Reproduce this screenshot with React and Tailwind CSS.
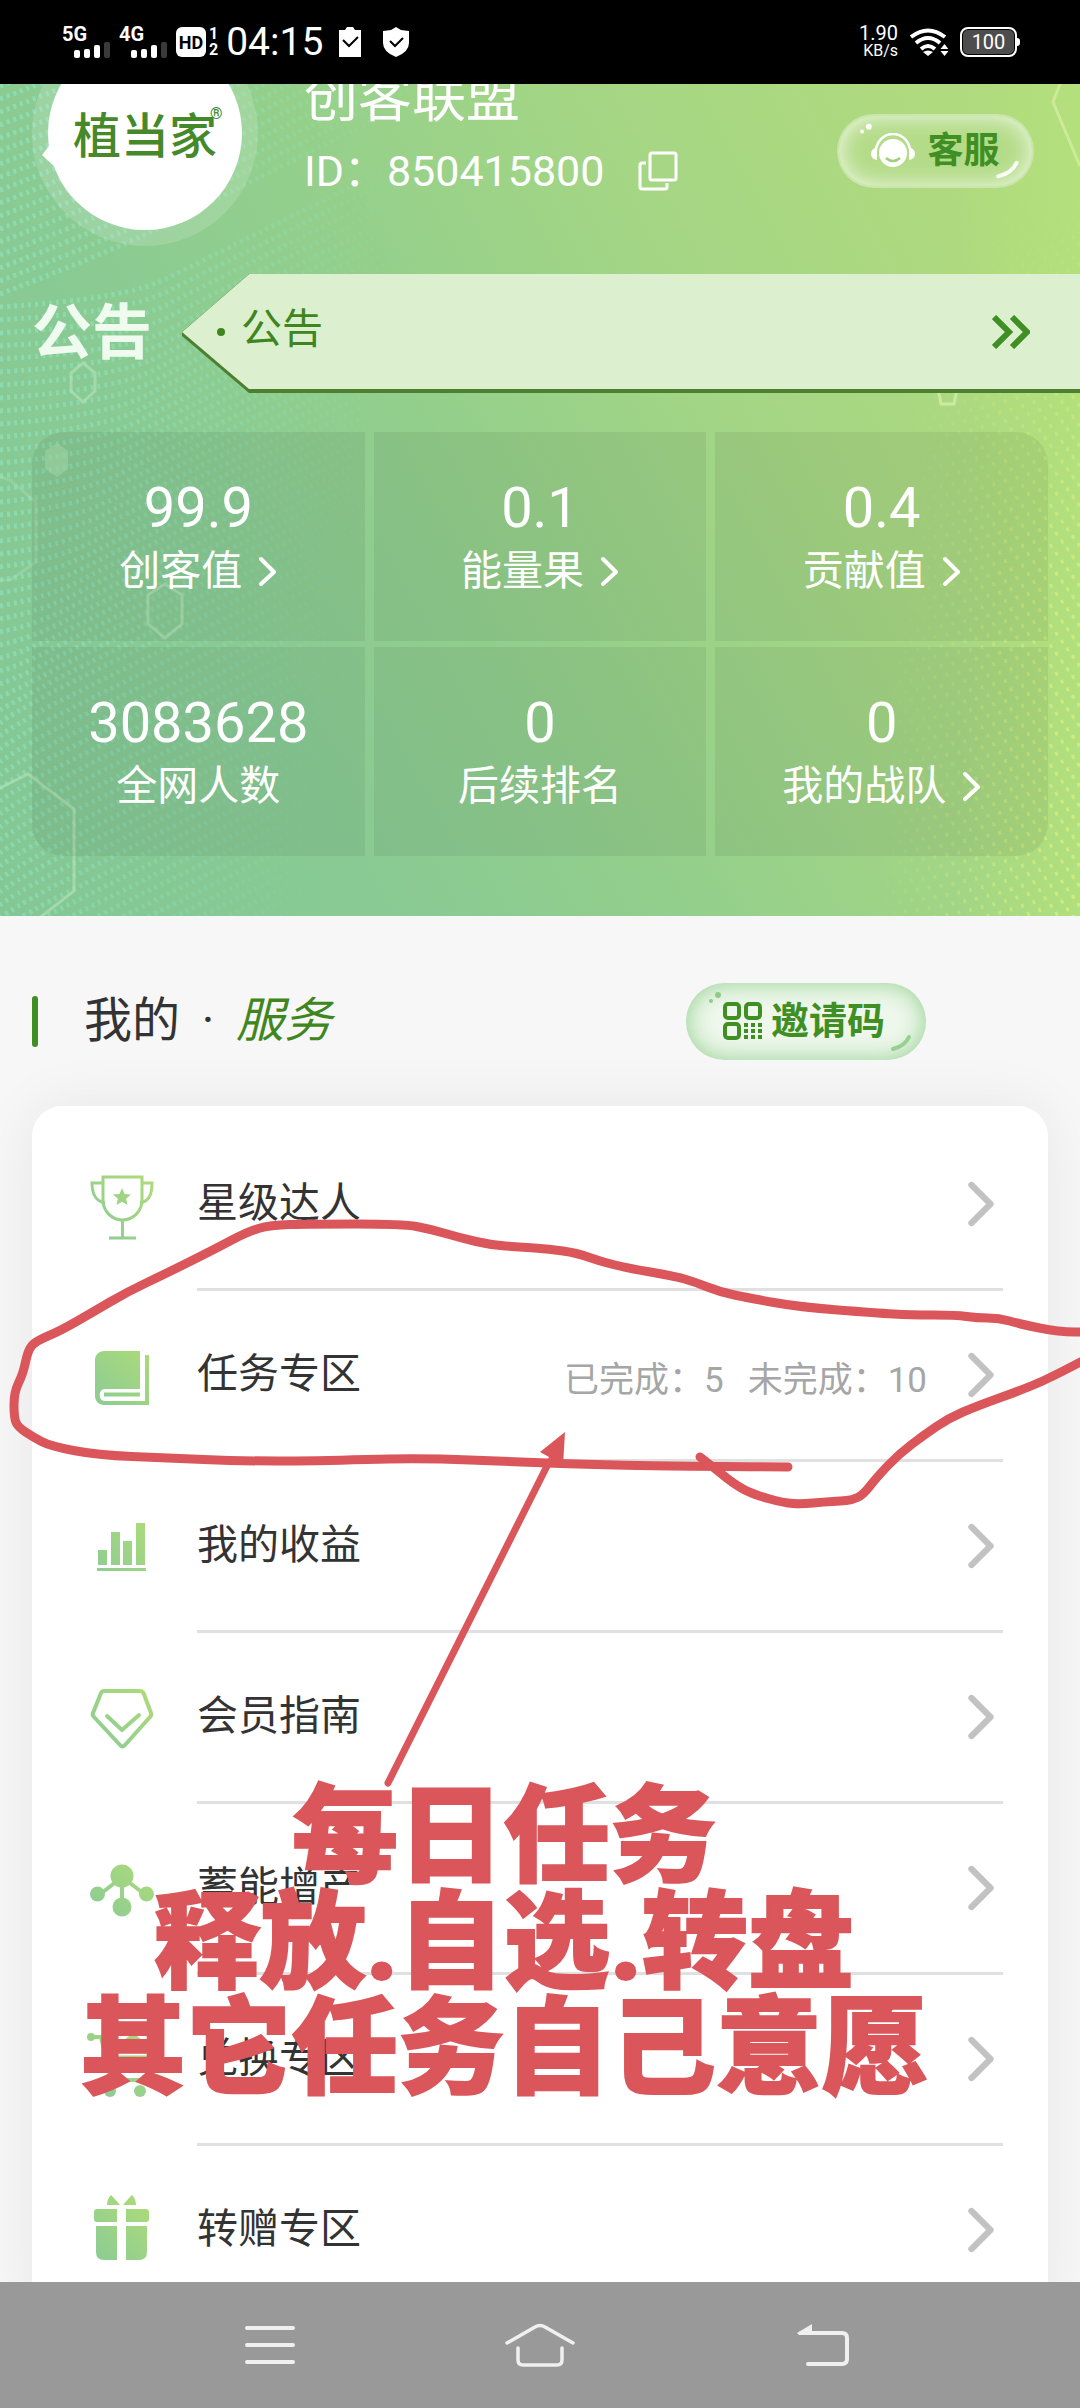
import React from 'react';
import { ChevronRight } from 'lucide-react';

const stats = [
  { value: '99.9', label: '创客值', link: true },
  { value: '0.1', label: '能量果', link: true },
  { value: '0.4', label: '贡献值', link: true },
  { value: '3083628', label: '全网人数' },
  { value: '0', label: '后续排名' },
  { value: '0', label: '我的战队', link: true },
];

const statCorners = ['rounded-tl-[32px]', '', 'rounded-tr-[32px]', 'rounded-bl-[32px]', '', 'rounded-br-[32px]'];

const fill = 'url(#leaf)';

const services = [
  { name: '星级达人', icon: <TrophyIcon /> },
  { name: '任务专区', icon: <BookIcon />, done: 5, todo: 10 },
  { name: '我的收益', icon: <BarsIcon /> },
  { name: '会员指南', icon: <DiamondIcon /> },
  { name: '蓄能增产', icon: <MoleculeIcon /> },
  { name: '兑换专区', icon: <CartIcon /> },
  { name: '转赠专区', icon: <GiftIcon /> },
];

function Icon({ children }) {
  return (
    <svg viewBox="0 0 64 64" className="h-16 w-16 shrink-0 overflow-visible" fill="none" aria-hidden="true">
      {children}
    </svg>
  );
}

function TrophyIcon() {
  return (
    <Icon>
      <g stroke={fill} strokeWidth="3">
        <path d="M13 3H52V26a19.500 20 0 0 1-39 0Z" />
        <path d="M13 9H2c0 12 4 18 13 20M52 9h10c0 12-3 18-12 20M32.500 46v17M19 64h27" />
      </g>
      <path fill={fill} d="M32 14l2.600 6 6.400.6-4.900 4.200 1.500 6.300-5.600-3.400-5.600 3.400 1.500-6.300-4.900-4.200 6.400-.6Z" />
    </Icon>
  );
}

function BookIcon() {
  return (
    <Icon>
      <path fill={fill} d="M14 6H50V44H15c-7 0-7 12 0 12h40V10h4v50H14c-5 0-9-4-9-9V15c0-5 4-9 9-9Z" />
      <path fill={fill} d="M14 47.500H50v4H14Z" />
    </Icon>
  );
}

function BarsIcon() {
  return (
    <Icon>
      <path fill={fill} d="M8 34h9v15H8ZM21 16h9v33h-9ZM33 25h9v24h-9ZM46 7h9v42h-9ZM7 52h49v3H7Z" />
    </Icon>
  );
}

function DiamondIcon() {
  return (
    <Icon>
      <path stroke={fill} strokeWidth="4" strokeLinejoin="round" d="M14 4H50Q52 4 53.500 6L61 26Q62 28 60 30L35 58Q32.500 61 30 58L4 30Q2 28 3 26L11 6Q12 4 14 4Z" />
      <path stroke={fill} strokeWidth="4" strokeLinecap="round" strokeLinejoin="round" d="M17 29L32 43L49 28" />
    </Icon>
  );
}

function MoleculeIcon() {
  return (
    <Icon>
      <path stroke={fill} strokeWidth="4" d="M32 19L8 38M32 19L57 38M32 19v30" />
      <g fill={fill}>
        <circle cx="32" cy="18" r="11.500" />
        <circle cx="7.500" cy="36" r="7.500" />
        <circle cx="56.500" cy="36" r="7.500" />
        <circle cx="32" cy="49" r="9.500" />
      </g>
    </Icon>
  );
}

function CartIcon() {
  return (
    <Icon>
      <path stroke={fill} strokeWidth="4" strokeLinecap="round" strokeLinejoin="round" d="M1 8h10l10 43h33" />
      <circle fill={fill} cx="1" cy="8" r="4" />
      <path fill={fill} d="M16 20H62L55 41H20ZM30 14L43 4l13 10Z" />
      <path stroke="#fff" strokeWidth="5" d="M18 24H60" />
      <circle fill={fill} cx="20" cy="62" r="6" />
      <circle fill={fill} cx="50" cy="62" r="6" />
    </Icon>
  );
}

function GiftIcon() {
  return (
    <Icon>
      <g fill={fill}>
        <path d="M17 5c0-4 1-7 4-10 3 3 6 6 9 10H17ZM46 5c0-4-1-7-4-10-3 3-6 6-9 10h13Z" />
        <path d="M7 9h20v13H7q-3 0-3-3v-7q0-3 3-3ZM36 9h20q3 0 3 3v7q0 3-3 3H36Z" />
        <path d="M6 26h21v34H14q-8 0-8-8ZM36 26h21v26q0 8-8 8H36Z" />
      </g>
    </Icon>
  );
}

function Signal() {
  return (
    <svg viewBox="0 0 36 16" className="ml-3 h-4 w-9" aria-hidden="true">
      <rect x="0" y="8" width="6" height="8" rx="2" fill="#fff" />
      <rect x="10" y="7" width="6" height="9" rx="2" fill="#fff" />
      <rect x="20" y="3" width="6" height="13" rx="2" fill="#fff" />
      <rect x="30" y="0" width="6" height="16" rx="2" fill="#3a3a3a" />
    </svg>
  );
}

function StatusBar() {
  return (
    <div className="flex h-[84px] shrink-0 items-center bg-black pr-[60px] pl-[62px] text-white">
      {['5G', '4G'].map((net) => (
        <div key={net} className="mr-[9px] flex flex-col">
          <span className="h-4 text-[20px] leading-4 font-bold">{net}</span>
          <Signal />
        </div>
      ))}
      <span className="flex h-[30px] w-[30px] items-center justify-center rounded-md bg-white text-[18px] font-bold text-black">HD</span>
      <span className="mr-2 ml-[3px] flex flex-col text-[16px] leading-4 font-bold">
        <span>1</span>
        <span>2</span>
      </span>
      <span className="text-[39px]">04:15</span>
      <svg viewBox="0 0 22 30" className="ml-4 h-[30px] w-[22px]" aria-hidden="true">
        <path d="M0 3h6l2-3h6l2 3h6v27H0Z" fill="#fff" />
        <path d="M4 13l6 6 9-9" fill="none" stroke="#000" strokeWidth="2" />
      </svg>
      <svg viewBox="0 0 26 30" className="ml-[22px] h-[30px] w-[26px]" aria-hidden="true">
        <path d="M13 0l5 3 8 1v12q0 9-13 14Q0 25 0 16V4l8-1Z" fill="#fff" />
        <path d="M7 14l5 5 8-8" fill="none" stroke="#000" strokeWidth="2" />
      </svg>
      <span className="ml-auto flex flex-col items-end">
        <span className="text-[20px] leading-[18px]">1.90</span>
        <span className="text-[16px] leading-[18px]">KB/s</span>
      </span>
      <svg viewBox="0 0 38 28" className="ml-3 h-7 w-[38px]" fill="none" aria-hidden="true">
        <g stroke="#fff" strokeWidth="4">
          <path d="M1 9Q18 -4 35 9" />
          <path d="M6 15Q18 5 30 15" />
          <path d="M11 21Q18 15 25 21" />
        </g>
        <path fill="#fff" d="M13 24q5-3 10 0l-5 4ZM34.500 16l4 5h-8ZM34.500 28l4-5h-8Z" />
      </svg>
      <span className="ml-3 flex h-[30px] w-[57px] items-center justify-center rounded-lg border-2 border-white bg-[#4d4d4d] text-[20px] ring-1 ring-black ring-inset">100</span>
      <span className="h-2 w-[3px] rounded-r bg-white" />
    </div>
  );
}

// one row of dots: nearly flat at the edge, then climbing after the knee
function wave(y) {
  const knee = Math.min(130, Math.max(10, 150 - (y - 216) * 0.33));
  const edge = y < 216 ? 50 : 8;
  return `M0 ${y}Q${knee} ${y - edge} ${knee + 40} ${y - edge - 22}L440 ${y - edge - 22 - (400 - knee) * 0.5}`;
}

// rows of small dots that sweep up from both edges, plus the loose hexagons
function HeaderArt() {
  const left = [];
  for (let y = -50; y < 1050; y += 13) left.push(y);
  const right = [];
  for (let y = 150; y < 1000; y += 10) right.push(y);
  return (
    <svg viewBox="0 0 1080 832" preserveAspectRatio="none" className="absolute inset-0 h-full w-full" fill="none" aria-hidden="true">
      <defs>
        <linearGradient id="fadeL" x1="0" x2="1" y1="0" y2="0.3">
          <stop offset="0" stopColor="#fff" />
          <stop offset="0.4" stopColor="#fff" stopOpacity="0.7" />
          <stop offset="1" stopColor="#fff" stopOpacity="0" />
        </linearGradient>
        <linearGradient id="fadeR" x1="1" x2="0" y1="1" y2="0.8">
          <stop offset="0" stopColor="#fff" />
          <stop offset="1" stopColor="#fff" stopOpacity="0" />
        </linearGradient>
        <linearGradient id="fadeTop" x1="0" x2="0" y1="0" y2="1">
          <stop offset="0" stopColor="#fff" stopOpacity="0.1" />
          <stop offset="0.5" stopColor="#fff" />
        </linearGradient>
        <linearGradient id="glow" x1="0" x2="1" y1="0" y2="0">
          <stop offset="0" stopColor="#b4e27c" stopOpacity="0" />
          <stop offset="1" stopColor="#b4e27c" stopOpacity="0.8" />
        </linearGradient>
        <mask id="maskL">
          <rect width="420" height="832" fill="url(#fadeL)" />
        </mask>
        <mask id="maskR">
          <rect x="880" y="120" width="200" height="712" fill="url(#fadeR)" />
        </mask>
        <mask id="maskTop">
          <rect x="880" y="120" width="200" height="712" fill="url(#fadeTop)" />
        </mask>
      </defs>
      <rect x="960" width="120" height="832" fill="url(#glow)" />
      <g mask="url(#maskL)" stroke="#8fe6c0" strokeOpacity="0.65" strokeWidth="5" strokeDasharray="3 4">
        {left.map((y) => (
          <path key={y} d={wave(y)} />
        ))}
      </g>
      <g mask="url(#maskTop)">
        <g mask="url(#maskR)" stroke="#d6f07c" strokeOpacity="0.85" strokeWidth="4" strokeDasharray="3 9">
          {right.map((y, i) => (
            <path key={y} strokeDashoffset={i % 2 ? 6 : 0} d={`M880 ${y}Q990 ${y - 10} 1080 ${y - 50}`} />
          ))}
        </g>
      </g>
      <g stroke="#b5e5b8" strokeOpacity="0.6" strokeWidth="3">
        <path d="M83 279l12 10v18l-12 11-12-11v-18Z" />
        <path d="M165 500l17 11v29l-17 14-17-14v-29Z" />
        <path d="M-10 709L28 690l46 35v82l-36 28" />
        <path d="M-10 390L10 396L36 418v60l-26 18H-10" strokeOpacity="0.3" />
      </g>
      <path d="M57 359l11 8v18l-11 8-12-8v-18Z" fill="#a9dfae" fillOpacity="0.6" />
      <path d="M1060 0l-7 18 27 64" stroke="#cdea9a" strokeWidth="3" />
      <path d="M937 300l4 20h13l4-20" stroke="#c9eaa0" strokeWidth="3" />
    </svg>
  );
}

function Profile() {
  return (
    <div className="relative flex items-center pr-[46px] pl-8">
      <div className="flex h-[226px] w-[226px] shrink-0 rounded-full bg-white/15 p-4">
        <div className="relative flex flex-1 items-center justify-center rounded-full bg-white pt-2">
          <svg viewBox="0 0 14 26" className="absolute top-[106px] left-[-6px] h-[26px] w-[14px]" fill="#fff" aria-hidden="true">
            <path d="M0 13L10 0l4 26Z" />
          </svg>
          <span className="text-[48px] leading-[48px] font-medium text-[#45892a]">植当家</span>
          <span className="absolute top-[70px] left-[162px] text-[16px] leading-4 font-bold text-[#45892a]">®</span>
        </div>
      </div>
      <div className="ml-[46px] pt-1 text-white">
        <h1 className="text-[54px] leading-[72px]">创客联盟</h1>
        <div className="flex items-center text-[43px] leading-[72px]">
          <span>ID：850415800</span>
          <button type="button" aria-label="复制" className="ml-[34px]">
            <svg viewBox="0 0 40 40" className="h-10 w-10" fill="none" stroke="#fff" strokeWidth="3" aria-hidden="true">
              <rect x="12" y="2" width="26" height="27" rx="2" />
              <path d="M8 12H4q-2 0-2 2v22q0 2 2 2h23q2 0 2-2v-4" />
            </svg>
          </button>
        </div>
      </div>
      <button
        type="button"
        className="relative mt-9 ml-auto flex h-[74px] w-[197px] items-center justify-center gap-3 rounded-full border-2 border-white/30 bg-[#b4dc88] text-[36px] font-bold text-[#3f8f24] shadow-[inset_0_0_22px_rgba(255,255,255,0.85)]"
      >
        <svg viewBox="0 0 44 36" className="h-9 w-11" fill="none" aria-hidden="true">
          <ellipse cx="22" cy="20" rx="14" ry="14" fill="#fff" />
          <path d="M5 16C9 -4 35 -4 39 16" stroke="#fff" strokeWidth="2.500" />
          <path d="M6 14q-6 2-6 7t6 6ZM38 14q6 2 6 7t-6 6Z" fill="#fff" />
          <path d="M15 25q7 6 14 0" stroke="#9fd07a" strokeWidth="2.500" />
        </svg>
        客服
        <svg viewBox="0 0 197 72" className="absolute inset-0 h-full w-full" fill="none" aria-hidden="true">
          <circle cx="30" cy="11" r="3" fill="#fff" />
          <circle cx="23" cy="16" r="2" fill="#fff" />
          <path d="M163 62q14-3 19-14" stroke="#fff" strokeOpacity="0.9" strokeWidth="4" strokeLinecap="round" />
        </svg>
      </button>
    </div>
  );
}

function Notice() {
  return (
    <div className="relative mt-7 flex items-center gap-[30px] pl-8">
      <h2 className="text-[60px] leading-[72px] font-bold text-[#f0fbef]">公告</h2>
      <a href="#notice" className="flex-1 bg-[#4c8030] pb-1 [clip-path:polygon(0_58px,67px_0,100%_0,100%_100%,67px_100%,0_62px)]">
        <div className="flex h-[115px] items-center bg-[#dcefcf] pr-[50px] pl-[35px] text-[41px] text-[#3f8620] [clip-path:polygon(0_58px,67px_0,100%_0,100%_100%,67px_100%)]">
          <span className="mr-4 h-2 w-2 rounded-full bg-[#3f8620]" />
          <span className="pb-1">公告</span>
          <svg viewBox="0 0 38 34" className="ml-auto h-[34px] w-[38px]" fill="none" stroke="#3f8f24" strokeWidth="6" aria-hidden="true">
            <path d="M2 2l15 15L2 32M20 2l15 15-15 15" />
          </svg>
        </div>
      </a>
    </div>
  );
}

function Stats() {
  return (
    <div className="relative mt-[39px] grid grid-cols-3 gap-x-[9px] gap-y-[6px] px-8">
      {stats.map((s, i) => (
        <a key={s.label} href="#stat" className={`flex h-[209px] flex-col items-center justify-center bg-black/6 pt-1 text-white ${statCorners[i]}`}>
          <span className="text-[56px] leading-[64px]">{s.value}</span>
          <span className="flex items-center text-[41px] leading-[62px]">
            {s.label}
            {s.link && (
              <svg viewBox="0 0 19 30" className="ml-4 h-[30px] w-[19px]" fill="none" stroke="#fff" strokeWidth="4" strokeLinecap="round" strokeLinejoin="round" aria-hidden="true">
                <path d="M3 3l13 13L3 28" />
              </svg>
            )}
          </span>
        </a>
      ))}
    </div>
  );
}

function ServiceTitle() {
  return (
    <div className="flex h-[190px] items-center px-8 pt-5">
      <span className="h-[51px] w-[6px] rounded-full bg-[#3f8f24]" />
      <h2 className="ml-[46px] flex text-[48px] leading-[72px] text-[#333]">
        <span>我的</span>
        <span className="w-14 text-center">·</span>
        <em className="text-[#3f8620] italic">服务</em>
      </h2>
      <button
        type="button"
        className="relative mr-[122px] ml-auto flex h-[77px] w-[240px] items-center justify-center gap-2 rounded-full bg-[#eef7ec] pr-1 text-[38px] font-bold text-[#3f8f24] shadow-[inset_0_0_24px_#93d18f]"
      >
        <svg viewBox="0 0 40 38" className="h-[38px] w-10" fill="none" stroke="#3f8f24" strokeWidth="4" aria-hidden="true">
          <rect x="2" y="2" width="14" height="14" rx="3" />
          <rect x="23" y="2" width="14" height="14" rx="3" />
          <rect x="2" y="22" width="14" height="14" rx="3" />
          <path d="M23 21v17M30 21v17M37 21v17" strokeDasharray="4 2" />
        </svg>
        邀请码
        <svg viewBox="0 0 240 77" className="absolute inset-0 h-full w-full" fill="none" aria-hidden="true">
          <circle cx="32" cy="12" r="3" fill="#8fca88" />
          <circle cx="25" cy="18" r="2" fill="#8fca88" />
          <path d="M207 66q12-3 16-12" stroke="#97d090" strokeWidth="4" strokeLinecap="round" />
        </svg>
      </button>
    </div>
  );
}

function ServiceList() {
  return (
    <div className="mx-8 rounded-t-[30px] bg-white pt-[14px] shadow-[0_0_60px_rgba(0,0,0,0.07)]">
      {services.map((s) => (
        <a key={s.name} href="#service" className="flex items-center pr-[45px] pl-[58px]">
          {s.icon}
          <div className="ml-[43px] flex h-[171px] flex-1 items-center border-b-[3px] border-[#e0e0e0] pr-[10px] text-[41px] text-[#333]">
            {s.name}
            {s.done && (
              <span className="mt-3 ml-auto flex gap-6 text-[35px] text-[#a6a6a6]">
                <span>已完成：{s.done}</span>
                <span>未完成：{s.todo}</span>
              </span>
            )}
            <span className={s.done ? 'ml-4' : 'ml-auto'}>
              <ChevronRight className="-mr-[26px] h-[76px] w-[76px] text-[#c2c2c2]" strokeWidth={2} />
            </span>
          </div>
        </a>
      ))}
    </div>
  );
}

const loop = [
  [788, 1467], [656, 1466], [574, 1464], [520, 1462], [420, 1458], [313, 1461], [240, 1461], [167, 1458], [97, 1455], [50, 1446],
  [33, 1437], [18, 1427], [14, 1418], [14, 1392], [23, 1374], [28, 1350], [36, 1341], [60, 1331], [93, 1312], [127, 1292],
  [167, 1273], [213, 1250], [247, 1232], [270, 1225], [310, 1224], [403, 1224], [430, 1229], [461, 1238], [491, 1245], [520, 1247],
  [549, 1249], [577, 1253], [599, 1261], [627, 1268], [674, 1276], [695, 1282], [720, 1292], [749, 1298], [799, 1307], [877, 1313],
  [910, 1315], [956, 1315], [977, 1318], [999, 1318], [1020, 1324], [1059, 1332], [1090, 1332],
];

const tail = [
  [1090, 1357], [1056, 1375], [1027, 1388], [977, 1406], [949, 1418], [924, 1435], [899, 1454], [877, 1477], [863, 1495], [852, 1500],
  [841, 1501], [824, 1502], [802, 1504], [784, 1503], [752, 1494], [734, 1484], [713, 1467], [700, 1457],
];

// join the points through their midpoints so that the stroke stays soft
function smooth(points) {
  let d = `M${points[0]}`;
  for (let i = 1; i < points.length - 1; i++) {
    const [x, y] = points[i];
    const [nx, ny] = points[i + 1];
    d += `Q${x} ${y} ${(x + nx) / 2} ${(y + ny) / 2}`;
  }
  return `${d}L${points[points.length - 1]}`;
}

// hand drawn circle and arrow over the task row, with the red caption
function Markup() {
  return (
    <div className="pointer-events-none absolute inset-x-0 top-0">
      <svg viewBox="0 0 1080 1784" className="w-full overflow-visible" fill="none" aria-hidden="true">
        <g stroke="#da565a" strokeWidth="9" strokeLinecap="round" strokeLinejoin="round">
          <path d={smooth(loop)} />
          <path d={smooth(tail)} />
          <path d="M388 1783L548 1464" strokeWidth="7" />
        </g>
        <path fill="#da565a" d="M565 1432L540 1452L549 1457L547 1462L563 1466Z" />
      </svg>
      <p className="pr-[72px] text-center text-[106px] leading-[106px] font-black whitespace-nowrap text-[#da565a] [-webkit-text-stroke:2px_#da565a]">
        每日任务
        <br />
        释放.自选.转盘
        <br />
        其它任务自己意愿
      </p>
    </div>
  );
}

function NavBar() {
  return (
    <nav className="relative flex h-[126px] shrink-0 justify-center bg-[#999]">
      <button type="button" aria-label="菜单" className="flex w-1/4 items-center justify-center">
        <svg viewBox="0 0 50 40" className="h-10 w-[50px]" stroke="#f0f0f0" strokeWidth="4" strokeLinecap="round" aria-hidden="true">
          <path d="M2 3H48M2 20H48M2 37H48" />
        </svg>
      </button>
      <button type="button" aria-label="主页" className="flex w-1/4 items-center justify-center">
        <svg viewBox="0 0 70 44" className="h-11 w-[70px]" fill="none" stroke="#f0f0f0" strokeWidth="3.500" strokeLinecap="round" aria-hidden="true">
          <path d="M2 20L30 4Q35 1 40 4L68 20M13 25V37Q13 42 18 42H52Q57 42 57 37V25" />
        </svg>
      </button>
      <button type="button" aria-label="返回" className="flex w-1/4 items-center justify-center">
        <svg viewBox="0 0 78 44" className="h-11 w-[78px]" fill="none" aria-hidden="true">
          <path stroke="#f0f0f0" strokeWidth="4" strokeLinecap="round" d="M37 41H71Q76 41 76 36V15Q76 10 71 10H30" />
          <path fill="#f0f0f0" d="M26 10L41 1V12H28Z" />
        </svg>
      </button>
    </nav>
  );
}

export default function App() {
  return (
    <div className="relative flex h-screen flex-col overflow-hidden bg-[#f7f7f7] font-[Roboto,'Noto_Sans_CJK_SC',sans-serif]">
      <svg className="absolute h-0 w-0" aria-hidden="true">
        <linearGradient id="leaf" gradientUnits="userSpaceOnUse" x1="4" y1="60" x2="60" y2="4">
          <stop offset="0" stopColor="#8bcb95" />
          <stop offset="1" stopColor="#addb78" />
        </linearGradient>
      </svg>
      <StatusBar />
      <main className="min-h-0 flex-1 overflow-hidden">
        <header className="relative overflow-hidden bg-[linear-gradient(62deg,#84c795_0%,#89ca94_25%,#93cf8c_45%,#a5d684_68%,#b0da7e_90%)] pb-[60px]">
          <HeaderArt />
          <div className="-mt-16">
            <Profile />
          </div>
          <Notice />
          <Stats />
        </header>
        <ServiceTitle />
        <ServiceList />
      </main>
      <Markup />
      <NavBar />
    </div>
  );
}
